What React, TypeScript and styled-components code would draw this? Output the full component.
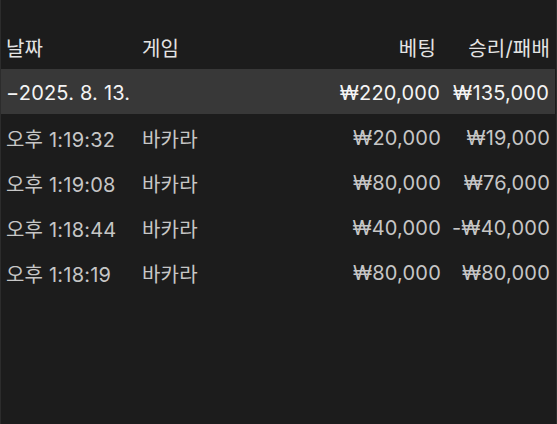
import React from "react";
import styled, { createGlobalStyle } from "styled-components";

const Global = createGlobalStyle`
  html, body { margin: 0; padding: 0; background: #1c1c1c; }
  body { font-family: "Inter", "Noto Sans CJK KR", sans-serif; }
`;

const Panel = styled.div`
  width: 557px;
  height: 424px;
  box-sizing: border-box;
  background: #1c1c1c;
  border-left: 1px solid #2c2c2c;
  border-right: 1px solid #2c2c2c;
  padding-top: 23px;
`;

const Row = styled.div<{ $variant: "head" | "group" | "item" }>`
  display: grid;
  grid-template-columns: 136px 1fr 120px 109px;
  align-items: center;
  box-sizing: border-box;
  height: ${(p) => (p.$variant === "head" ? 46 : 45)}px;
  padding: 3px 6px 0 5px;
  margin-right: ${(p) => (p.$variant === "group" ? 1 : 0)}px;
  background: ${(p) => (p.$variant === "group" ? "#383838" : "transparent")};
  color: ${(p) =>
    p.$variant === "group" ? "#f4f4f4" : p.$variant === "head" ? "#e4e4e4" : "#c6c6c6"};
  font-size: 20px;
  letter-spacing: 0.2px;
  white-space: nowrap;
`;

const Cell = styled.div<{ $right?: boolean; $inset?: number }>`
  text-align: ${(p) => (p.$right ? "right" : "left")};
  padding-right: ${(p) => p.$inset ?? 0}px;
`;

const items = [
  { time: "오후 1:19:32", game: "바카라", bet: "₩20,000", win: "₩19,000" },
  { time: "오후 1:19:08", game: "바카라", bet: "₩80,000", win: "₩76,000" },
  { time: "오후 1:18:44", game: "바카라", bet: "₩40,000", win: "-₩40,000" },
  { time: "오후 1:18:19", game: "바카라", bet: "₩80,000", win: "₩80,000" },
];

export default function App() {
  return (
    <>
      <Global />
      <Panel>
        <Row $variant="head">
          <Cell>날짜</Cell>
          <Cell>게임</Cell>
          <Cell $right $inset={5}>베팅</Cell>
          <Cell $right>승리/패배</Cell>
        </Row>
        <Row $variant="group">
          <Cell>−2025. 8. 13.</Cell>
          <Cell />
          <Cell $right>₩220,000</Cell>
          <Cell $right>₩135,000</Cell>
        </Row>
        {items.map((it) => (
          <Row $variant="item" key={it.time}>
            <Cell>{it.time}</Cell>
            <Cell>{it.game}</Cell>
            <Cell $right>{it.bet}</Cell>
            <Cell $right>{it.win}</Cell>
          </Row>
        ))}
      </Panel>
    </>
  );
}
